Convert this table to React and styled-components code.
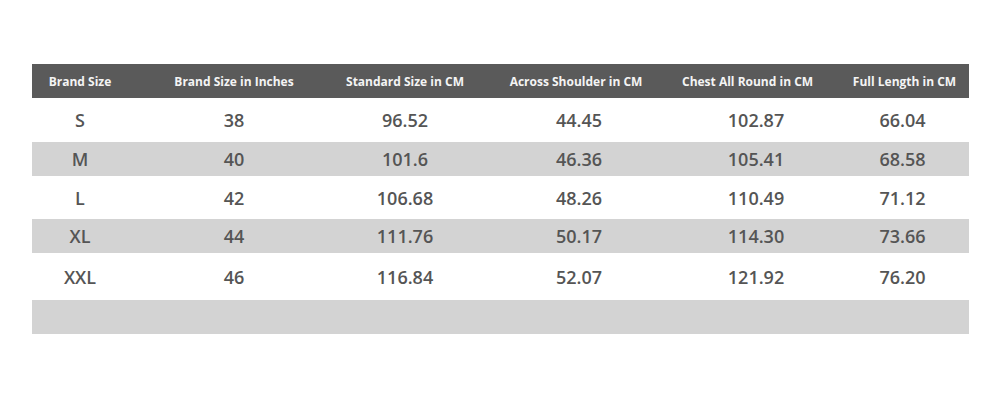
import React from "react";
import styled, { createGlobalStyle } from "styled-components";

const GlobalStyle = createGlobalStyle`
  body {
    margin: 0;
    background: #ffffff;
    font-family: "Open Sans", "Liberation Sans", sans-serif;
  }
`;

const columns = [
  "Brand Size",
  "Brand Size in Inches",
  "Standard Size in CM",
  "Across Shoulder in CM",
  "Chest All Round in CM",
  "Full Length in CM",
];

const rows = [
  { values: ["S", "38", "96.52", "44.45", "102.87", "66.04"], height: 44, shaded: false },
  { values: ["M", "40", "101.6", "46.36", "105.41", "68.58"], height: 34, shaded: true },
  { values: ["L", "42", "106.68", "48.26", "110.49", "71.12"], height: 43, shaded: false },
  { values: ["XL", "44", "111.76", "50.17", "114.30", "73.66"], height: 34, shaded: true },
  { values: ["XXL", "46", "116.84", "52.07", "121.92", "76.20"], height: 47, shaded: false },
  { values: ["", "", "", "", "", ""], height: 34, shaded: true },
];

const Page = styled.div`
  padding: 64px 31px 0 32px;
`;

const Table = styled.div`
  width: 937px;
`;

const Row = styled.div`
  display: grid;
  grid-template-columns: 96px 212px 130px 212px 128px 1fr;
  align-items: center;
  height: ${(p) => p.$height}px;
  background: ${(p) => (p.$shaded ? "#d3d3d3" : "#ffffff")};
`;

const HeaderRow = styled(Row)`
  background: #5a5a5a;
`;

const HeadCell = styled.div`
  text-align: center;
  color: #f4f4f4;
  font-size: 12px;
  font-weight: 700;
  white-space: nowrap;

  &:last-child {
    padding-left: 30px;
  }
`;

const Cell = styled.div`
  text-align: center;
  color: #555555;
  font-size: 18px;
  font-weight: 600;
  white-space: nowrap;

  &:nth-child(4) {
    padding-left: 6px;
  }
  &:nth-child(5) {
    padding-left: 20px;
  }
  &:last-child {
    padding-left: 26px;
  }
`;

export default function App() {
  return (
    <>
      <GlobalStyle />
      <Page>
        <Table>
          <HeaderRow $height={34}>
            {columns.map((c) => (
              <HeadCell key={c}>{c}</HeadCell>
            ))}
          </HeaderRow>
          {rows.map((r, i) => (
            <Row key={i} $height={r.height} $shaded={r.shaded}>
              {r.values.map((v, j) => (
                <Cell key={j}>{v}</Cell>
              ))}
            </Row>
          ))}
        </Table>
      </Page>
    </>
  );
}
